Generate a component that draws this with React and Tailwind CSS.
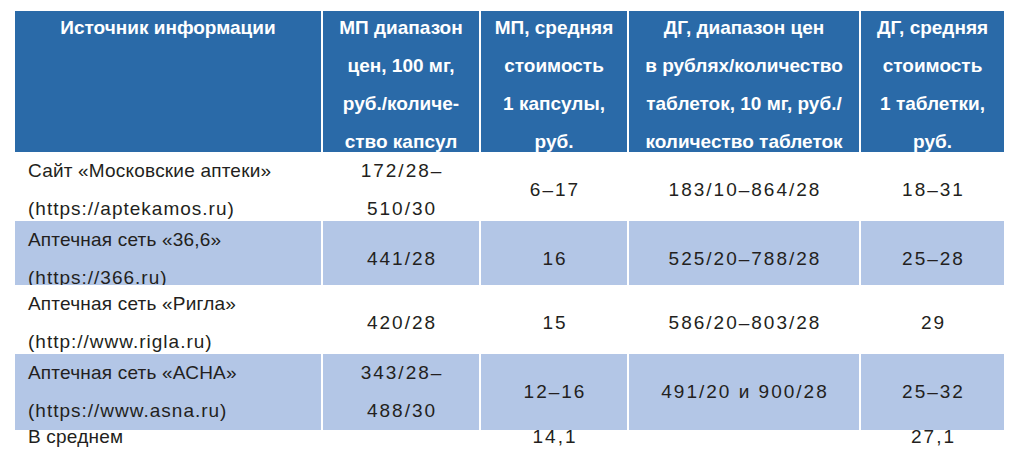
const headers = [
  ["Источник информации"],
  ["МП диапазон", "цен, 100 мг,", "руб./количе-", "ство капсул"],
  ["МП, средняя", "стоимость", "1 капсулы,", "руб."],
  ["ДГ, диапазон цен", "в рублях/количество", "таблеток, 10 мг, руб./", "количество таблеток"],
  ["ДГ, средняя", "стоимость", "1 таблетки,", "руб."],
];

const rows = [
  {
    shaded: false,
    h: "h-[69px]",
    cells: [
      ["Сайт «Московские аптеки»", "(https://aptekamos.ru)"],
      ["172/28–", "510/30"],
      ["6–17"],
      ["183/10–864/28"],
      ["18–31"],
    ],
  },
  {
    shaded: true,
    h: "h-[64px]",
    cells: [
      ["Аптечная сеть «36,6»", "(https://366.ru)"],
      ["441/28"],
      ["16"],
      ["525/20–788/28"],
      ["25–28"],
    ],
  },
  {
    shaded: false,
    h: "h-[69px]",
    cells: [
      ["Аптечная сеть «Ригла»", "(http://www.rigla.ru)"],
      ["420/28"],
      ["15"],
      ["586/20–803/28"],
      ["29"],
    ],
  },
  {
    shaded: true,
    h: "h-[65px]",
    cells: [
      ["Аптечная сеть «АСНА»", "(https://www.asna.ru)"],
      ["343/28–", "488/30"],
      ["12–16"],
      ["491/20 и 900/28"],
      ["25–32"],
    ],
  },
];

const cols = "grid grid-cols-[306px_156px_146px_230px_143px] gap-x-[2px]";

export default function App() {
  return (
    <div
      className="w-[1030px] h-[467px] bg-white pt-[11px] pl-[15px] overflow-hidden text-[#231f20]"
      style={{ fontFamily: '"Liberation Sans", Arial, sans-serif' }}
    >
      <div className={`${cols} h-[141px]`}>
        {headers.map((lines, i) => (
          <div key={i} className="bg-[#2a6aa8] text-white font-bold text-[19px] leading-[38px] text-center">
            <div className="-mt-[2px]">
              {lines.map((l) => (
                <div key={l} className="whitespace-nowrap">{l}</div>
              ))}
            </div>
          </div>
        ))}
      </div>

      {rows.map((row, r) => (
        <div key={r} className={`${cols} ${row.h}`}>
          {row.cells.map((lines, c) => (
            <div
              key={c}
              className={`${row.shaded ? "bg-[#b3c6e6]" : "bg-white"} flex flex-col justify-center text-[19px] leading-[38px] ${
                c === 0 ? "items-start pl-[13px]" : "items-center tracking-[2px] pl-[2px]"
              }`}
            >
              {lines.map((l, k) => (
                <div
                  key={l}
                  className={`whitespace-nowrap ${c === 0 ? (k === 0 ? "tracking-[0.2px]" : "tracking-[1px]") : ""}`}
                >
                  {l}
                </div>
              ))}
            </div>
          ))}
        </div>
      ))}

      <div className={`${cols} h-[36px] text-[19px] leading-[36px]`}>
        <div className="pl-[13px] tracking-[0.2px]">В среднем</div>
        <div></div>
        <div className="text-center tracking-[2px] pl-[2px]">14,1</div>
        <div></div>
        <div className="text-center tracking-[2px] pl-[2px]">27,1</div>
      </div>
    </div>
  );
}
